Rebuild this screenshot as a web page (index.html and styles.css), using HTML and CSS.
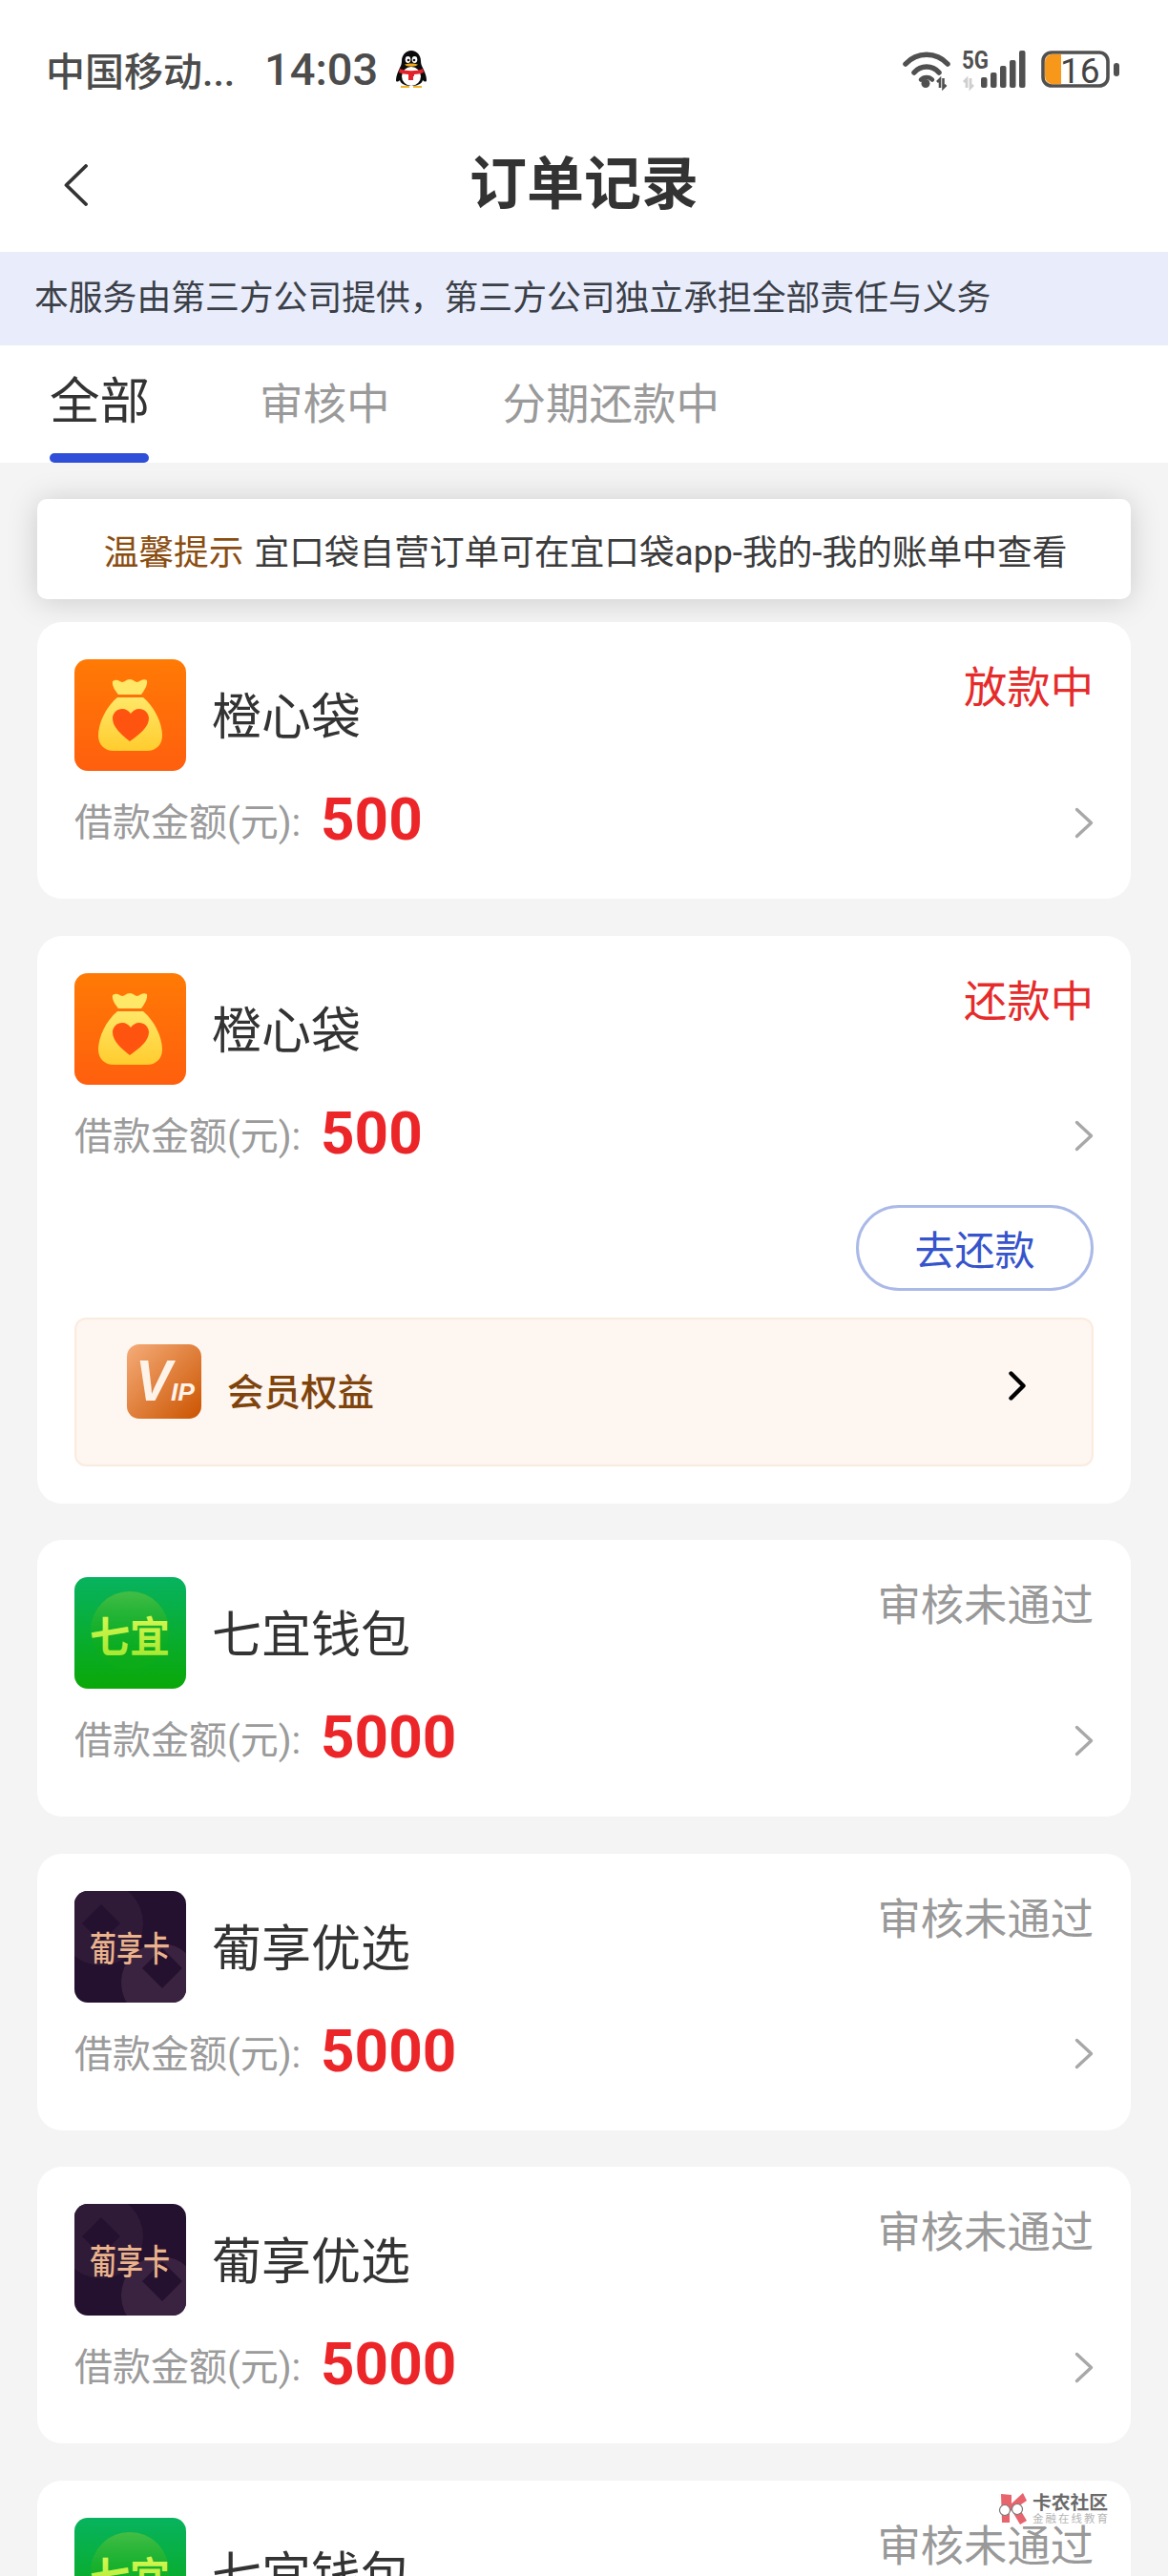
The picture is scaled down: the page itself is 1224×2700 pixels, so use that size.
FILE: index.html
```html
<!DOCTYPE html>
<html lang="zh-CN">
<head>
<meta charset="utf-8">
<title>订单记录</title>
<link rel="stylesheet" href="styles.css">
</head>
<body>
<svg class="sprite" aria-hidden="true">
  <defs>
    <linearGradient id="gOrange" x1="0" y1="0" x2="0" y2="1"><stop offset="0" stop-color="#ff7a05"/><stop offset="1" stop-color="#ff5f0e"/></linearGradient>
    <linearGradient id="gBag" x1="0" y1="0" x2="0" y2="1"><stop offset="0" stop-color="#ffe768"/><stop offset="1" stop-color="#ffcc2e"/></linearGradient>
    <linearGradient id="gGreen" x1="0" y1="0" x2="0" y2="1"><stop offset="0" stop-color="#07b35f"/><stop offset="1" stop-color="#0aa808"/></linearGradient>
    <linearGradient id="gDisc" x1="0" y1="0" x2="0" y2="1"><stop offset="0" stop-color="#44bd45"/><stop offset=".7" stop-color="#12ad12" stop-opacity=".3"/></linearGradient>
    <linearGradient id="gQy" x1="0" y1="0" x2="0" y2="1"><stop offset="0" stop-color="#e4fb5a"/><stop offset="1" stop-color="#9be62a"/></linearGradient>
    <linearGradient id="gVip" x1="0" y1="0" x2="1" y2="1"><stop offset="0" stop-color="#f5ac79"/><stop offset="1" stop-color="#cb5400"/></linearGradient>
    <symbol id="iconBag" viewBox="0 0 117 117">
      <rect width="117" height="117" rx="14" fill="url(#gOrange)"/>
      <path d="M40 23c5-3 7 0 10 1 3 0 4-3 8-3s5 3 8 3c3-1 6-4 10-2 1 5-3 11-6 15H46c-3-4-7-9-6-14z" fill="#ffe768"/>
      <path d="M45 40h27c12 10 20 27 20 40 0 10-7 16-16 16H41c-9 0-16-6-16-16 0-13 8-30 20-40z" fill="url(#gBag)"/>
      <path d="M58 86C49 79 40 71 40 62c0-6 5-10 10-10 4 0 7 2 9 5 2-3 5-5 9-5 5 0 10 4 10 10 0 9-10 17-20 24z" fill="#ff5410"/>
    </symbol>
    <symbol id="iconGreen" viewBox="0 0 117 117">
      <rect width="117" height="117" rx="14" fill="url(#gGreen)"/>
      <circle cx="58" cy="56" r="41" fill="url(#gDisc)"/>
      <text class="qy-text" x="16" y="79" textLength="84" lengthAdjust="spacingAndGlyphs" fill="url(#gQy)">七宜</text>
    </symbol>
    <symbol id="iconPurple" viewBox="0 0 117 117">
      <rect width="117" height="117" rx="14" fill="#24112f"/>
      <clipPath id="clipP"><rect width="117" height="117" rx="14"/></clipPath>
      <g clip-path="url(#clipP)">
        <circle cx="28" cy="34" r="44" fill="#2f1a37"/>
        <path d="M28 14l20 20-20 20-20-20z" fill="#24112f"/>
        <circle cx="90" cy="96" r="41" fill="#3a2340"/>
        <path d="M92 60l21 21-21 21-21-21z" fill="#24112f"/>
      </g>
      <text class="py-text" x="16" y="74" textLength="84" lengthAdjust="spacingAndGlyphs" fill="#eab38c">葡享卡</text>
    </symbol>
    <symbol id="chevGray" viewBox="0 0 20 33">
      <path d="M2.5 2.5L17.5 16.5 2.5 30.5" fill="none" stroke="#a8a8a8" stroke-width="3.4" stroke-linecap="round" stroke-linejoin="round"/>
    </symbol>
  </defs>
</svg>

<div class="page">
  <header class="statusbar">
    <span class="carrier">中国移动...</span>
    <span class="clock">14:03</span>
    <svg class="penguin" viewBox="0 0 32 39" width="32" height="39">
      <path d="M16 0c6 0 10 5 10 11 0 3 1 5 2 7 2 4 4 9 4 13 0 2-2 2-4 0-1 4-6 6-12 6S5 35 4 31c-2 2-4 2-4 0 0-4 2-9 4-13 1-2 2-4 2-7C6 5 10 0 16 0z" fill="#0b0b0b"/>
      <ellipse cx="16" cy="27" rx="10" ry="10" fill="#fff"/>
      <ellipse cx="12.500" cy="9.500" rx="2.800" ry="3.400" fill="#fff"/>
      <ellipse cx="19.500" cy="9.500" rx="2.800" ry="3.400" fill="#fff"/>
      <circle cx="13" cy="10" r="1.300" fill="#111"/>
      <circle cx="19" cy="10" r="1.300" fill="#111"/>
      <path d="M9 14.500c4-1.500 10-1.500 14 0-2 3-12 3-14 0z" fill="#f2a81c"/>
      <path d="M4 19c7 3 17 3 24 0l1 4c-3 1-7 2-10 2v2h-1v4h-5v-6c-3 0-7-1-10-2z" fill="#e3222a"/>
      <path d="M5 37h9v2H5zM18 37h9v2h-9z" fill="#f5b324"/>
    </svg>
    <div class="status-icons">
      <svg class="ic-wifi" viewBox="0 0 50 39" width="50" height="39">
        <g fill="none" stroke="#505050" stroke-linecap="round" stroke-width="5.500">
          <path d="M3 14C15 1 35 1 47 14"/>
          <path d="M12 23C19 15 31 15 38 23"/>
          <path d="M19 30.500C22 27 28 27 31 30.500" stroke-width="4.500"/>
        </g>
        <circle cx="24" cy="34.500" r="4.500" fill="#505050"/>
        <path d="M39 39V30l-3 3M42.500 29v10l3-3" fill="none" stroke="#505050" stroke-width="2.600"/>
      </svg>
      <svg class="ic-cell" viewBox="0 0 71 39" width="71" height="39">
        <text class="fiveg" x="0" y="19" textLength="28" lengthAdjust="spacingAndGlyphs">5G</text>
        <path d="M5 39V30l-3 3M9 29v10l3-3" fill="none" stroke="#cfcfcf" stroke-width="2.800"/>
        <g fill="#505050">
          <rect x="20" y="28" width="6.500" height="11" rx="2"/>
          <rect x="30" y="23" width="6.500" height="16" rx="2"/>
          <rect x="40" y="16" width="6.500" height="23" rx="2"/>
          <rect x="50" y="10" width="6.500" height="29" rx="2"/>
          <rect x="60" y="0" width="6.500" height="39" rx="2"/>
        </g>
      </svg>
      <svg class="ic-batt" viewBox="0 0 82 39" width="82" height="39">
        <rect x="2" y="2" width="68" height="35" rx="9" fill="#fff" stroke="#505050" stroke-width="3.600"/>
        <path d="M12 3.800h9v31.400h-9a8 8 0 0 1-8-8V11.800a8 8 0 0 1 8-8z" fill="#f7981b"/>
        <text class="batt-num" x="20" y="34">16</text>
        <rect x="76" y="13" width="6" height="14" rx="3" fill="#505050"/>
      </svg>
    </div>
  </header>

  <nav class="navbar">
    <svg class="back" viewBox="0 0 25 44" width="25" height="44"><path d="M23 2L2.500 22 23 42" fill="none" stroke="#333" stroke-width="3.800" stroke-linecap="round" stroke-linejoin="round"/></svg>
    <h1 class="title">订单记录</h1>
  </nav>

  <div class="notice">本服务由第三方公司提供，第三方公司独立承担全部责任与义务</div>

  <div class="tabs">
    <div class="tab tab-active">全部</div>
    <div class="tab tab-review">审核中</div>
    <div class="tab tab-repay">分期还款中</div>
  </div>

  <main class="list">
    <div class="tip"><span class="tip-label">温馨提示</span><span>宜口袋自营订单可在宜口袋app-我的-我的账单中查看</span></div>

    <section class="card">
      <div class="card-head">
        <svg class="logo"><use href="#iconBag"/></svg>
        <div class="name">橙心袋</div>
        <div class="state state-red">放款中</div>
      </div>
      <div class="amount-row">
        <span class="label">借款金额(元):</span><span class="amount">500</span>
        <svg class="chev"><use href="#chevGray"/></svg>
      </div>
    </section>

    <section class="card">
      <div class="card-head">
        <svg class="logo"><use href="#iconBag"/></svg>
        <div class="name">橙心袋</div>
        <div class="state state-red">还款中</div>
      </div>
      <div class="amount-row">
        <span class="label">借款金额(元):</span><span class="amount">500</span>
        <svg class="chev"><use href="#chevGray"/></svg>
      </div>
      <div class="actions"><div class="btn">去还款</div></div>
      <div class="vip">
        <svg class="vip-logo" viewBox="0 0 78 78" width="78" height="78">
          <rect width="78" height="78" rx="13" fill="url(#gVip)"/>
          <text class="vip-v" x="9" y="59" textLength="38" lengthAdjust="spacingAndGlyphs">V</text>
          <text class="vip-ip" x="46" y="59" textLength="25" lengthAdjust="spacingAndGlyphs">IP</text>
        </svg>
        <span class="vip-text">会员权益</span>
        <svg class="vip-chev" viewBox="0 0 18 31" width="18" height="31"><path d="M2.500 2.500L15.500 15.500 2.500 28.500" fill="none" stroke="#000" stroke-width="4.400" stroke-linecap="round" stroke-linejoin="round"/></svg>
      </div>
    </section>

    <section class="card">
      <div class="card-head">
        <svg class="logo"><use href="#iconGreen"/></svg>
        <div class="name">七宜钱包</div>
        <div class="state">审核未通过</div>
      </div>
      <div class="amount-row">
        <span class="label">借款金额(元):</span><span class="amount">5000</span>
        <svg class="chev"><use href="#chevGray"/></svg>
      </div>
    </section>

    <section class="card">
      <div class="card-head">
        <svg class="logo"><use href="#iconPurple"/></svg>
        <div class="name">葡享优选</div>
        <div class="state">审核未通过</div>
      </div>
      <div class="amount-row">
        <span class="label">借款金额(元):</span><span class="amount">5000</span>
        <svg class="chev"><use href="#chevGray"/></svg>
      </div>
    </section>

    <section class="card">
      <div class="card-head">
        <svg class="logo"><use href="#iconPurple"/></svg>
        <div class="name">葡享优选</div>
        <div class="state">审核未通过</div>
      </div>
      <div class="amount-row">
        <span class="label">借款金额(元):</span><span class="amount">5000</span>
        <svg class="chev"><use href="#chevGray"/></svg>
      </div>
    </section>

    <section class="card">
      <div class="card-head">
        <svg class="logo"><use href="#iconGreen"/></svg>
        <div class="name">七宜钱包</div>
        <div class="state">审核未通过</div>
      </div>
      <div class="amount-row">
        <span class="label">借款金额(元):</span><span class="amount">5000</span>
        <svg class="chev"><use href="#chevGray"/></svg>
      </div>
    </section>
  </main>

  <div class="watermark">
    <svg class="wm-mark" viewBox="0 0 33 33" width="33" height="33">
      <path d="M4 1l11 1v9L27 0l4 8-9 6 9 15-7 4-9-15-2 2v11H5z" fill="#e8646c"/>
      <circle cx="8" cy="18" r="5.500" fill="#fff" stroke="#777" stroke-width="1.200"/>
      <circle cx="21" cy="17" r="5.500" fill="#fff" stroke="#777" stroke-width="1.200"/>
    </svg>
    <div class="wm-text">
      <div class="wm-main">卡农社区</div>
      <div class="wm-sub">金融在线教育</div>
    </div>
  </div>
</div>
</body>
</html>
```
FILE: styles.css
```css
* { box-sizing: border-box; margin: 0; padding: 0; }
html, body { width: 1224px; height: 2700px; overflow: hidden; background: #f4f4f4; }
body { font-family: Roboto, "Noto Sans CJK SC", sans-serif; color: #333; }
.sprite { position: absolute; width: 0; height: 0; }
.page { position: relative; width: 1224px; height: 2700px; overflow: hidden; }

.statusbar { height: 124px; padding: 20px 51px 0 48px; background: #fff; display: flex; align-items: center; color: #4c4c4c; }
.carrier { font-size: 41px; font-weight: 500; width: 229px; white-space: nowrap; }
.clock { font-size: 47px; font-weight: 500; width: 138px; }
.status-icons { margin-left: auto; display: flex; align-items: center; gap: 12px; }
.status-icons svg { overflow: visible; }
.penguin { display: block; }
.fiveg { font: 700 25px Roboto, sans-serif; fill: #505050; }
.batt-num { font: 400 37px Roboto, sans-serif; fill: #444; }

.navbar { height: 140px; background: #fff; display: grid; grid-template-columns: 1fr auto 1fr; align-items: center; }
.back { margin-left: 67px; display: block; }
.title { font-size: 60px; font-weight: 700; color: #333; line-height: 1; grid-column: 2; }

.notice { height: 98px; background: #e9edfb; font-size: 35.800px; line-height: 98px; padding-left: 36px; color: #3b4048; white-space: nowrap; }

.tabs { height: 123px; background: #fff; position: relative; display: flex; padding-left: 52px; }
.tab { font-size: 45.500px; color: #9a9a9a; line-height: 1; padding-top: 40px; white-space: nowrap; }
.tab-active { position: relative; font-size: 52.500px; color: #333; width: 104px; padding-top: 33px; margin-right: 116px; }
.tab-active::after { content: ""; position: absolute; left: 0; right: 0; bottom: 0; height: 10px; border-radius: 5px; background: #2f4fd9; }
.tab-review { margin-right: 118px; }

.list { padding: 38px 39px 0; }
.tip { height: 105px; background: #fff; border-radius: 10px; box-shadow: 0 2px 32px rgba(0, 0, 0, .17); display: flex; align-items: center; justify-content: center; gap: 11px; font-size: 36.700px; color: #3b3b3b; margin-bottom: 24px; padding-left: 3px; white-space: nowrap; }
.tip-label { color: #8a4d10; }

.card { background: #fff; border-radius: 26px; padding: 39px; margin-bottom: 38.600px; }
.card-head { display: flex; align-items: flex-start; height: 117px; }
.logo { width: 117px; height: 117px; flex: none; display: block; }
.name { font-size: 52px; line-height: 117px; margin-left: 27px; padding-top: 3px; color: #333; }
.state { margin-left: auto; font-size: 45.300px; line-height: 62px; color: #999; }
.state-red { color: #e62b2b; }

.amount-row { display: flex; align-items: center; height: 68px; margin-top: 17px; margin-bottom: 10px; }
.label { font-size: 40px; color: #9b9b9b; width: 258px; white-space: nowrap; }
.amount { font-size: 62px; font-weight: 700; color: #ec2529; line-height: 1; }
.chev { width: 20px; height: 33px; margin-left: auto; margin-top: 6px; display: block; }

.actions { display: flex; justify-content: flex-end; margin-top: 41px; }
.btn { width: 249px; height: 90px; border: 3px solid #aab9e7; border-radius: 45px; color: #3654cc; font-size: 42px; display: flex; align-items: center; justify-content: center; }

.vip { display: flex; align-items: center; height: 156px; margin-top: 28px; padding-left: 53px; padding-right: 69px; background: #fdf6f1; border: 2px solid #fbebdf; border-radius: 12px; }
.vip-logo { display: block; flex: none; margin-bottom: 22px; }
.vip-text { font-size: 38.500px; font-weight: 500; color: #7f430c; margin-left: 27px; margin-bottom: 6px; }
.vip-chev { margin-left: auto; display: block; margin-bottom: 12px; }
.vip-v { font: italic 700 62px "Liberation Sans", sans-serif; fill: #fdf3e9; }
.vip-ip { font: italic 700 25px "Liberation Sans", sans-serif; fill: #fdf3e9; }

.qy-text { font: 700 44px "Noto Sans CJK SC", sans-serif; }
.py-text { font: 500 36px "Noto Sans CJK SC", sans-serif; }

.watermark { position: absolute; left: 1045px; top: 2613px; display: flex; gap: 4px; }
.wm-mark { display: block; }
.wm-main { font-size: 19.800px; font-weight: 700; color: #6a6a6a; line-height: 20px; margin-top: 1px; white-space: nowrap; }
.wm-sub { font-size: 11.500px; letter-spacing: 2px; color: #b5b5b5; line-height: 13px; margin-top: 0; white-space: nowrap; }
```
